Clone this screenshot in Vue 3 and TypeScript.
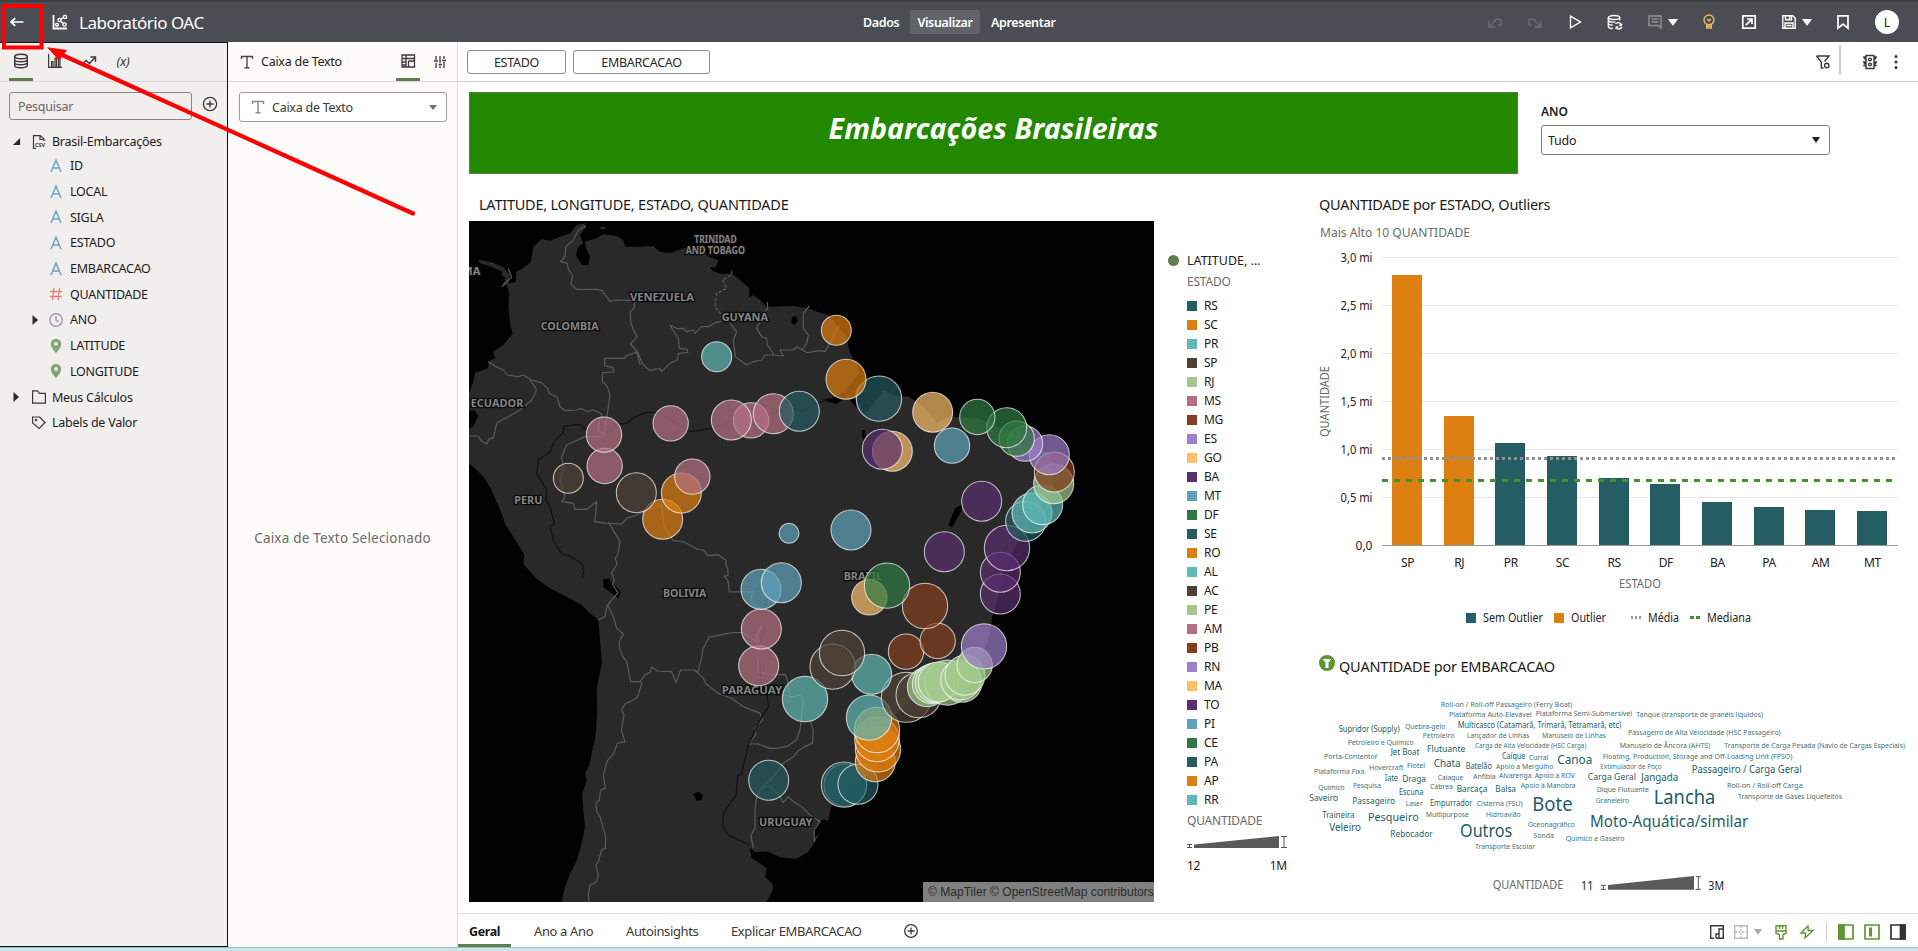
<script setup lang="ts">
interface Field { label: string; kind: 'text' | 'number' | 'time' | 'geo'; expandable?: boolean }
interface Bubble { x: number; y: number; r: number; c: string }

const fields: Field[] = [
  { label: 'ID', kind: 'text' },
  { label: 'LOCAL', kind: 'text' },
  { label: 'SIGLA', kind: 'text' },
  { label: 'ESTADO', kind: 'text' },
  { label: 'EMBARCACAO', kind: 'text' },
  { label: 'QUANTIDADE', kind: 'number' },
  { label: 'ANO', kind: 'time', expandable: true },
  { label: 'LATITUDE', kind: 'geo' },
  { label: 'LONGITUDE', kind: 'geo' },
]

const teal = '#245d63', orange = '#de7f11', aqua = '#5fb9b5', brown = '#4f4138', lime = '#a2c98b', rose = '#b67083'
const rust = '#843e1e', lilac = '#9f7fcc', sand = '#fdc16b', plum = '#5a2f6f', sky = '#60a2bb', green = '#2f7a43'
const palette = [teal, orange, aqua, brown, lime, rose, rust, lilac, sand, plum, sky, green]
const states = 'RS SC PR SP RJ MS MG ES GO BA MT DF SE RO AL AC PE AM PB RN MA TO PI CE PA AP RR'
  .split(' ').map((name, i) => ({ name, color: palette[i % palette.length] }))

const raw: [string, number[][]][] = [
  [orange, [[1129, 451, 45], [1158, 598, 60], [608, 1018, 60], [664, 939, 60], [1251, 1650, 68], [1251, 1678, 67], [1254, 1708, 68], [1246, 1745, 60]]],
  [aqua, [[770, 530, 45], [1748, 974, 60], [1716, 999, 60], [1035, 1557, 68], [1235, 1483, 60], [1227, 1613, 68]]],
  [rose, [[432, 764, 53], [434, 858, 53], [632, 730, 53], [814, 720, 60], [873, 721, 53], [940, 701, 60], [697, 890, 53], [904, 1347, 60], [896, 1457, 60]]],
  [teal, [[1018, 694, 60], [1257, 656, 68], [1697, 1024, 60], [926, 1801, 60], [1152, 1814, 68], [1156, 1815, 64], [1194, 1813, 60]]],
  [brown, [[325, 895, 45], [529, 938, 60], [1146, 1419, 68], [1118, 1460, 68], [1339, 1552, 75], [1376, 1545, 68]]],
  [sky, [[987, 1060, 30], [1173, 1050, 60], [1476, 797, 53], [903, 1228, 60], [964, 1208, 60]]],
  [sand, [[1418, 697, 60], [1297, 814, 60], [1228, 1252, 53]]],
  [green, [[1552, 711, 53], [1640, 743, 60], [1670, 776, 53], [1281, 1217, 68]]],
  [lilac, [[1695, 791, 53], [1768, 824, 60], [1572, 1399, 68]]],
  [rust, [[1783, 876, 60], [1395, 1278, 68], [1433, 1383, 53], [1338, 1415, 53]]],
  [lime, [[1781, 911, 60], [1401, 1521, 59], [1416, 1512, 59], [1426, 1508, 60], [1435, 1506, 60], [1462, 1508, 68], [1506, 1507, 60], [1502, 1500, 60], [1515, 1486, 60], [1544, 1455, 53]]],
  [plum, [[1267, 808, 60], [1565, 964, 60], [1453, 1115, 60], [1641, 1104, 68], [1621, 1177, 60], [1621, 1242, 60]]],
]
// Southern bubbles are painted first so northern ones overlap them.
const bubbles: Bubble[] = raw
  .flatMap(([c, list]) => list.map(([x, y, r]) => ({ x, y, r, c })))
  .sort((a, b) => b.y - a.y)

const countries: [string, number, number, number][] = [
  ['VENEZUELA', 510, 702, 362], ['COLOMBIA', 242, 416, 451], ['GUYANA', 785, 924, 423], ['ECUADOR', 32, 190, 680],
  ['PERU', 163, 247, 971], ['BOLIVIA', 609, 739, 1252], ['PARAGUAY', 785, 966, 1543], ['URUGUAY', 897, 1057, 1939], ['BRAZIL', 1151, 1266, 1201],
]
const islandLabels: [string, number, number, number][] = [['TRINIDAD', 703, 830, 188], ['AND TOBAGO', 677, 855, 221]]

const ticks = ['3,0 mi', '2,5 mi', '2,0 mi', '1,5 mi', '1,0 mi', '0,5 mi', '0,0']
const bars = [
  { s: 'SP', top: 275, out: true }, { s: 'RJ', top: 416, out: true }, { s: 'PR', top: 443, out: false },
  { s: 'SC', top: 456, out: false }, { s: 'RS', top: 478, out: false }, { s: 'DF', top: 484, out: false },
  { s: 'BA', top: 502, out: false }, { s: 'PA', top: 507, out: false }, { s: 'AM', top: 510, out: false }, { s: 'MT', top: 511, out: false },
]

// text, left, right, vertical middle, font size
const words: [string, number, number, number, number][] = [
  ['Roll-on / Roll-off Passageiro (Ferry Boat)', 422, 817, 194, 21],
  ['Plataforma Auto-Elevável', 447, 695, 224, 21],
  ['Plataforma Semi-Submersível', 707, 996, 221, 21],
  ['Tanque (transporte de granéis líquidos)', 1009, 1389, 224, 21],
  ['Multicasco (Catamarã, Trimarã, Tetramarã, etc)', 473, 964, 255, 25],
  ['Supridor (Supply)', 116, 299, 268, 25],
  ['Quebra-gelo', 315, 436, 260, 21],
  ['Petroleiro', 368, 463, 287, 21],
  ['Lançador de Linhas', 500, 688, 287, 21],
  ['Manuseio de Linhas', 726, 918, 287, 21],
  ['Passageiro de Alta Velocidade (HSC Passageiro)', 984, 1442, 278, 21],
  ['Petroleiro e Químico', 143, 341, 308, 21],
  ['Flutuante', 381, 496, 327, 28],
  ['Carga de Alta Velocidade (HSC Carga)', 525, 859, 318, 19],
  ['Manuseio de Âncora (AHTS)', 959, 1231, 317, 21],
  ['Transporte de Carga Pesada (Navio de Cargas Especiais)', 1273, 1815, 317, 21],
  ['Jet Boat', 272, 358, 337, 26],
  ['Porta-Contentor', 72, 233, 350, 21],
  ['Caíque', 606, 676, 349, 25],
  ['Curral', 687, 745, 353, 21],
  ['Canoa', 772, 877, 360, 38],
  ['Floating, Production, Storage and Off-Loading Unit (FPSO)', 908, 1477, 350, 21],
  ['Plataforma Fixa', 42, 194, 395, 21],
  ['Hovercraft', 207, 311, 383, 21],
  ['Flotel', 321, 375, 377, 21],
  ['Chata', 401, 482, 371, 33],
  ['Batelão', 497, 576, 378, 25],
  ['Apoio a Mergulho', 588, 760, 380, 21],
  ['Extimulador de Poço', 901, 1085, 381, 19],
  ['Passageiro / Carga Geral', 1175, 1505, 388, 32],
  ['Iate', 254, 294, 414, 26],
  ['Draga', 307, 378, 417, 28],
  ['Caiaque', 413, 490, 413, 21],
  ['Anfíbia', 519, 587, 410, 21],
  ['Alvarenga', 597, 695, 407, 21],
  ['Apoio a ROV', 704, 825, 407, 21],
  ['Carga Geral', 863, 1008, 411, 29],
  ['Jangada', 1023, 1135, 412, 30],
  ['Químico', 55, 134, 443, 21],
  ['Pesquisa', 159, 243, 437, 21],
  ['Escuna', 297, 370, 456, 25],
  ['Cábrea', 390, 459, 440, 21],
  ['Barcaça', 470, 562, 447, 27],
  ['Balsa', 586, 648, 447, 27],
  ['Apoio à Manobra', 662, 827, 437, 21],
  ['Dique Flutuante', 890, 1047, 449, 21],
  ['Roll-on / Roll-off Carga', 1281, 1508, 437, 21],
  ['Saveiro', 28, 114, 473, 26],
  ['Passageiro', 157, 285, 483, 27],
  ['Laser', 317, 368, 491, 21],
  ['Empurrador', 390, 517, 489, 25],
  ['Cisterna (FSU)', 530, 668, 491, 21],
  ['Bote', 697, 818, 493, 58],
  ['Graneleiro', 887, 987, 482, 21],
  ['Lancha', 1061, 1246, 473, 59],
  ['Transporte de Gases Liquefeitos', 1314, 1626, 470, 21],
  ['Traineira', 67, 163, 526, 25],
  ['Pesqueiro', 204, 356, 532, 34],
  ['Multipurpose', 377, 507, 524, 21],
  ['Hidroavião', 558, 662, 524, 21],
  ['Veleiro', 88, 183, 562, 30],
  ['Rebocador', 271, 398, 582, 27],
  ['Outros', 480, 637, 574, 52],
  ['Oceonagráfico', 683, 825, 554, 21],
  ['Moto-Aquática/similar', 870, 1345, 546, 48],
  ['Sonda', 700, 762, 587, 21],
  ['Químico e Gaseiro', 797, 973, 596, 21],
  ['Transporte Escolar', 525, 705, 620, 21],
]
</script>

<template>
  <div class="app">
    <header class="topbar">
      <div class="brand">
        <svg class="ic back" viewBox="0 0 16 16"><path d="M14.500 8H2M6.200 4.200 2 8l4.200 3.800" stroke="#fff" stroke-width="1.700" fill="none" /></svg>
        <svg class="ic scatter" viewBox="0 0 16 16" fill="none" stroke="#fff" stroke-width="1.300"><path d="M1.500 1v13.500H15" stroke-width="1.800" /><circle cx="5" cy="10.800" r="1.400" /><circle cx="7.500" cy="6" r="1.600" /><circle cx="13" cy="3" r="1.600" /><circle cx="12.500" cy="10.500" r="1.600" /><path d="M8.800 5 11.700 3.500M8.600 7.200l2.800 2.400" /></svg>
        <h1>Laboratório OAC</h1>
      </div>
      <nav class="modes"><span>Dados</span><span class="on">Visualizar</span><span class="pres">Apresentar</span></nav>
      <div class="actions">
        <span class="cell"><svg class="ic dim" viewBox="0 0 16 16"><path d="M2 6.500V13h6.500M2.500 12.500 7 8c1.200-4 7.500-4 7.300.3 0 2-1.300 3.200-3 3.200" /></svg></span>
        <span class="cell"><svg class="ic dim" viewBox="0 0 16 16"><path d="M14 6.500V13H7.500M13.500 12.500 9 8c-1.200-4-7.500-4-7.300.3 0 2 1.300 3.200 3 3.200" /></svg></span>
        <span class="cell"><svg class="ic" viewBox="0 0 16 16"><path d="M3.500 2.200 13.500 8l-10 5.800z" /></svg></span>
        <span class="cell"><svg class="ic" viewBox="0 0 16 16"><ellipse cx="7" cy="3.500" rx="5.700" ry="2" /><path d="M1.300 3.500v9c0 1.200 2 1.900 4.500 2M12.700 3.500v2.700M1.300 6.500c1 1.500 4 1.900 7 1.400M1.300 9.700c1 1 2.500 1.400 4.500 1.400M8.500 10a3 3 0 0 1 5.400.7M12 11.400l2 .4.900-2M14.800 13a3 3 0 0 1-5.500.5M9 15l.3-2 2 .2" /></svg></span>
        <span class="cell wide"><svg class="ic gray" viewBox="0 0 16 16"><path d="M2 2h12v12l-2.800-2.500H2zM4.500 5h7M4.500 8h7" /></svg><i class="caret white" /></span>
        <span class="cell"><svg class="ic bulb" viewBox="0 0 16 16"><path d="M5.700 10.500C4.300 9.300 3 8 3 6a5 5 0 0 1 10 0c0 2-1.300 3.300-2.700 4.500zM5.700 10.500h4.600V14H5.700zM5.700 12.300h4.600M6.200 5l1.800 2 1.800-2" /></svg></span>
        <span class="cell"><svg class="ic" viewBox="0 0 16 16"><path d="M1.800 1.800h12.400v12.400H1.800zM4.800 11.200l5.500-5.500M6 5h5v5" stroke-width="1.700" /></svg></span>
        <span class="cell wide"><svg class="ic" viewBox="0 0 16 16"><path d="M1.800 1.800h10l2.400 2.400v10H1.800zM4.500 1.800v4h6v-4M8.500 2v3M4 14V9h8v5M5.500 11.500h5" /></svg><i class="caret white" /></span>
        <span class="cell"><svg class="ic" viewBox="0 0 16 16"><path d="M3 1.800h10v12.400l-5-4-5 4z" stroke-width="1.700" /></svg></span>
        <span class="avatar">L</span>
      </div>
    </header>

    <div class="body">
      <aside class="data-panel">
        <div class="tabs">
          <span class="tab on"><svg class="ic dark" viewBox="0 0 16 16"><ellipse cx="8" cy="3.500" rx="6.300" ry="2.300" /><path d="M1.700 3.500v9c0 3 12.600 3 12.600 0v-9M1.700 6.500c0 3 12.600 3 12.600 0M1.700 9.500c0 3 12.600 3 12.600 0" /></svg></span>
          <span class="tab"><svg class="ic dark" viewBox="0 0 16 16"><path d="M1.600 1v13.400H15M4.500 14V8.500h1.500V14M8 14V5h1.500v9M11.500 14V3H13v11" stroke-width="1.200" /></svg></span>
          <span class="tab"><svg class="ic dark" viewBox="0 0 16 16"><path d="M1 12l4-4.500 3.500 3L14 4.500M9.500 4h5v5" /></svg></span>
          <span class="tab fx">(x)</span>
        </div>
        <div class="search"><div class="input">Pesquisar</div><svg class="plus" viewBox="0 0 16 16"><circle cx="8" cy="8" r="6.600" /><path d="M8 4.500v7M4.500 8h7" /></svg></div>
        <ul class="tree">
          <li class="root">
            <svg class="tw" viewBox="0 0 10 10"><path d="M9 1v8H1z" /></svg>
            <svg class="ic csv" viewBox="0 0 16 16"><path d="M5 14.300H2.500V1.600h6.800L13 5v2M9 1.800V5.500h4" /><text x="4" y="12.500">CSV</text></svg>
            <span>Brasil-Embarcações</span>
          </li>
          <li v-for="f in fields" :key="f.label" class="leaf">
            <svg class="tw" viewBox="0 0 10 10"><path v-if="f.expandable" d="M2.500 0 8 5l-5.500 5z" /></svg>
            <svg class="ic" viewBox="0 0 16 16" fill="none">
              <path v-if="f.kind === 'text'" d="M3 14 8 2.200 13 14M4.700 10h6.600" stroke="#6fa5bf" stroke-width="1.500" />
              <path v-else-if="f.kind === 'number'" d="M5.800 2 4.500 14M11.500 2l-1.300 12M2 5.500h12M1.800 10.500h12" stroke="#e5806f" stroke-width="1.300" />
              <template v-else-if="f.kind === 'time'"><circle cx="8" cy="8" r="6.200" stroke="#a990bd" stroke-width="1.400" /><path d="M8 4v4.300l2.500 1.200" stroke="#a990bd" stroke-width="1.400" /></template>
              <path v-else fill-rule="evenodd" d="M8 .8a5.200 5.200 0 0 0-5.200 5.200c0 4 5.200 9.200 5.200 9.200s5.200-5.200 5.200-9.200A5.200 5.200 0 0 0 8 .8zm0 3.200a1.900 1.900 0 1 1 0 3.800A1.900 1.900 0 0 1 8 4z" fill="#83a678" stroke="none" />
            </svg>
            <span>{{ f.label }}</span>
          </li>
          <li class="folder">
            <svg class="tw" viewBox="0 0 10 10"><path d="M2.500 0 8 5l-5.500 5z" /></svg>
            <svg class="ic dark thin" viewBox="0 0 16 16"><path d="M1.600 1.800h4.800l2 2.500h6v9.900H1.600z" /></svg>
            <span>Meus Cálculos</span>
          </li>
          <li class="folder">
            <svg class="tw" viewBox="0 0 10 10" />
            <svg class="ic dark thin" viewBox="0 0 16 16"><path d="M1.600 2h7L14 7.500 8.200 13.500 1.600 8z" /><circle cx="5" cy="5" r=".6" /></svg>
            <span>Labels de Valor</span>
          </li>
        </ul>
      </aside>

      <aside class="props-panel">
        <div class="props-head">
          <svg class="tt" viewBox="0 0 14 14"><path d="M1.500 4V1.500h11V4M7 1.500v11M4.500 12.800h5" /></svg>
          <span class="name">Caixa de Texto</span>
          <span class="tab on"><svg class="ic dark" viewBox="0 0 16 16"><path d="M2 2h12.500v12H2zM2 5.500h12.500M6 2v12M2 9h4M2 12h4M8.500 8v6M8.500 8h6" stroke-width="1.300" /></svg></span>
          <svg class="ic dark sl" viewBox="0 0 16 16"><path d="M4 2v4M4 9v5M8 2v7M8 12v2M12 2v3M12 8v6M2 7h4M6.500 10.500h3.500M10 6.500h4" stroke-width="1.300" /></svg>
        </div>
        <div class="picker">
          <svg class="tt lite" viewBox="0 0 14 14"><path d="M1.500 4V1.500h11V4M7 1.500v11M4.500 12.800h5" /></svg>
          <span>Caixa de Texto</span><i class="caret soft" />
        </div>
        <p class="hint">Caixa de Texto Selecionado</p>
      </aside>

      <main class="main">
        <div class="filters">
          <span class="chip a">ESTADO</span><span class="chip b">EMBARCACAO</span>
          <div class="filter-icons">
            <svg class="ic dark" viewBox="0 0 16 16"><path d="M1.500 2h12.500L9.500 7.500M1.500 2l4.800 6v6h2.200" /><circle cx="11.800" cy="11.500" r="2.200" /></svg>
            <i class="bar" />
            <svg class="ic dark" viewBox="0 0 16 16"><path d="M4 1.500h8v13H4zM4 3H1.200M4 8H1M4 11.500H1.200M12 3h2.800M12 8h3M12 11.500h2.800M1.500 3 4 6M1.500 8 4 11M14.500 3 12 6M14.500 8 12 11" /><circle cx="8" cy="5.500" r="1.400" /><circle cx="8" cy="10.500" r="1.400" /></svg>
            <svg class="dots" viewBox="0 0 4 14"><circle cx="2" cy="1.600" r="1.500" /><circle cx="2" cy="7" r="1.500" /><circle cx="2" cy="12.400" r="1.500" /></svg>
          </div>
        </div>

        <div class="canvas">
          <div class="row-top">
            <div class="banner">Embarcações Brasileiras</div>
            <div class="year"><label>ANO</label><div class="select">Tudo<i class="caret" /></div></div>
          </div>
          <div class="row-main">
            <section class="map-col">
              <h3>LATITUDE, LONGITUDE, ESTADO, QUANTIDADE</h3>
              <div class="map">
                <svg viewBox="27 123 2055 2043" width="685" height="681">
                  <rect x="27" y="123" width="2055" height="2043" fill="#020202" />
                  <path fill="#292929" d="M27 850 45 865 70 890 92 925 110 965 125 1000 135 1032 160 1070 192 1122 190 1152 230 1197 270 1225 320 1250 365 1275 385 1296 415 1320 420 1380 426 1450 415 1500 410 1530 412 1600 405 1680 395 1720 388 1755 375 1780 380 1802 367 1840 370 1890 375 1940 365 1990 350 2042 330 2082 315 2120 305 2166H920L940 2128 938 2112 915 2090 920 2065 900 2050 875 2035 870 2003 885 2016 925 2015 960 2032 1010 2036 1045 2015 1065 1985 1085 1950 1105 1920 1113 1880 1140 1850 1200 1800 1250 1770 1290 1690 1285 1640 1300 1610 1370 1545 1440 1510 1530 1500 1560 1455 1590 1360 1597 1310 1612 1262 1618 1230 1630 1180 1660 1110 1690 1060 1720 1010 1760 960 1780 920 1780 860 1760 815 1700 800 1660 760 1600 735 1560 716 1490 712 1470 708 1430 728 1408 700 1375 668 1345 650 1300 646 1270 630 1250 660 1225 690 1210 700 1190 650 1200 600 1190 550 1175 530 1165 500 1160 470 1130 435 1105 405 1080 398 1045 385 1000 378 920 380 900 360 880 346 868 352 868 325 840 300 815 280 785 283 757 272 750 262 768 262 775 240 745 230 725 210 675 203 630 220 600 215 580 198 540 200 495 200 490 180 470 168 430 163 410 175 375 185 378 205 390 230 385 255 365 255 348 225 355 200 370 190 360 165 378 142 375 130 350 135 330 160 300 170 270 182 245 178 220 200 213 245 190 265 168 275 168 305 140 312 148 345 145 380 150 430 158 460 130 495 100 515 105 535 85 545 85 565 45 578 40 605 27 640V693L42 690 55 708 40 738 27 745Z" />
                  <path fill="#292929" d="M55 239 95 247 130 262 150 285 146 312 125 322 137 295 122 283 128 275 90 258 60 250ZM420 142l12 -3 6 8 -16 1z" />
                  <g fill="#020202">
                    <path d="M430 1198l15 -3 20 22 18 20 -8 18 -15 -12 -15 -10 -15 -12zM997 410l12 -2 5 15 -12 12 -9 -8zM700 1843l14 -8 15 10 -5 15 -14 2zM1465 1035l20-50 22-12 -3 20 -28 50zM1206 750l8 0 5 20 -5 20 -8-25zM1085 660l40-8 30-20 5 20 -30 20zM1165 655l20 0 5 30zM1070 1935l20-18 12 5 -8 22 -30 30 -2-25z" />
                    <path d="M1150 640l30-40 50-60 10 30 -50 50 -10 35z" />
                  </g>
                  <g fill="none" stroke="#5b5b5b" stroke-width="3.600" stroke-linejoin="round">
                    <path d="M378 138 355 150 340 180 318 200 315 230 302 245 322 250 325 268 338 285 333 312 350 328 410 328 426 332 450 364 470 360 525 362 522 385 511 395 512 425 520 450 532 470 511 492 528 510 541 555M511 492 532 515 548 552 570 572 600 565 604 575 630 550 652 540 655 520 683 518 682 508 658 505 655 475 645 460 630 435 652 446 670 445 680 455 700 450 705 460 725 440 745 440 765 428 785 424" />
                    <path d="M145 265 155 292 125 320M85 545 105 558 130 570 142 585 175 590 190 585 215 600 245 608 262 625 268 640 292 652 300 680 315 692 350 690 362 685 382 695 400 690 425 702 425 712M210 600 228 625 228 635 215 660 180 690 130 718 110 730 100 775 88 775 80 793 62 780 55 768 27 768M528 517 498 528 495 535 434 535 434 558 458 562 462 576 428 578 427 605 442 620 450 645 433 765 415 750 420 712M430 770 375 770 320 795 305 832 310 860 300 900 315 950 305 965 340 970 345 988 380 988 410 965 405 1025 440 1030 485 1032 500 1015 530 1005 605 975 612 1040 640 1082 670 1085 700 1100 712 1108 730 1110 744 1127 775 1124 797 1140 798 1155 804 1168 804 1187 792 1188 804 1202 808 1236 878 1235 872 1258 885 1278 910 1290" />
                    <path d="M445 1025 480 1085 473 1125 465 1135 472 1152 455 1178 463 1200 457 1212 474 1238 443 1275 438 1290 435 1310 415 1320M443 1275 455 1300 460 1310 470 1345 490 1362 478 1385 478 1400 488 1430 500 1445 512 1505 540 1505 545 1510 532 1553 495 1572 485 1590 492 1605 484 1650 495 1685 472 1690 462 1720 442 1742 430 1785 436 1825 422 1830 418 1860 408 1870 410 1895 420 1910 430 1945 437 1970 436 2005 425 2010 415 2045 407 2055 415 2085 410 2105 390 2115 385 2145 388 2166" />
                    <path d="M540 1505 555 1485 572 1475 574 1461 592 1473 635 1475 648 1508 662 1470 705 1470 712 1478 725 1435 728 1410 747 1372 815 1358 850 1358 890 1385M712 1478 730 1495 738 1512 775 1540 815 1555 850 1580 900 1600 907 1620 885 1645 887 1665 866 1692 895 1692 930 1705 950 1705 980 1700 1010 1680 1020 1650 1030 1560 1020 1545 990 1552 982 1500 975 1483 940 1485 893 1475 900 1400 890 1365 910 1330 905 1290" />
                    <path d="M1050 1620 1060 1650 1057 1690 1035 1700 1015 1712 1000 1730 970 1750 945 1785 905 1822 930 1818 960 1850 970 1868 985 1850 1000 1865 1025 1880 1050 1905 1080 1925 1062 1950 1064 1985M905 1822 890 1850 885 1890 885 1945 873 1965 880 2005M922 365 923 385 912 400 915 415 900 425 890 445 905 470 920 475 922 495 942 525 970 528 960 510 1000 510 1010 500 1042 518 1080 512 1095 515 1115 480 1138 435M1048 378 1030 400 1030 445 1045 465 1040 490 1025 510M942 525 915 525 905 540 880 545 860 555 826 530 820 480 830 455 810 430" />
                    <path stroke-dasharray="10 5" d="M815 272 815 285 787 300 800 325 770 340 765 380 785 405" />
                  </g>
                  <g fill="none" stroke="#111" stroke-width="3.500">
                    <path d="M585 697 560 697 525 710 500 730 470 733 440 762M585 697 620 712 690 755 755 745 830 720 890 722 980 682 1028 692 1060 675 1100 660M385 755 360 733 312 738 308 760 285 782 270 815 235 840 230 880 260 930 258 960 272 985 283 1030 270 1040 280 1080 305 1122 330 1128 365 1152 372 1170 366 1195M920 1545 926 1580 905 1610 865 1695 845 1780 833 1788 828 1845 790 1900 788 1940 805 1965 870 1995M960 1185 940 1210 905 1300 915 1350 895 1400 905 1520" />
                  </g>
                  <g class="geo" font-size="33"><text v-for="[t, a, b, y] in countries" :key="t" :x="a" :y="y" :textLength="b - a" lengthAdjust="spacingAndGlyphs">{{ t }}</text></g>
                  <g class="geo" font-size="29"><text v-for="[t, a, b, y] in islandLabels" :key="t" :x="a" :y="y" :textLength="b - a" lengthAdjust="spacingAndGlyphs">{{ t }}</text><text x="61" y="286" font-size="33" text-anchor="end">MA</text></g>
                  <circle v-for="(b, i) in bubbles" :key="i" :cx="b.x" :cy="b.y" :r="b.r" :fill="b.c" fill-opacity=".7" stroke="#fff" stroke-opacity=".7" stroke-width="3.200" />
                </svg>
                <span class="credit">© MapTiler © OpenStreetMap contributors</span>
              </div>
            </section>

            <section class="legend">
              <div class="lg-title"><i />LATITUDE, ...</div>
              <div class="lg-sub">ESTADO</div>
              <ul><li v-for="s in states" :key="s.name"><i :style="{ background: s.color }" />{{ s.name }}</li></ul>
              <div class="lg-sub qty">QUANTIDADE</div>
              <svg width="102" height="16" viewBox="0 0 102 16"><path d="M7 10.500 92 2v12H7z" fill="#5a5a5a" /><path d="M0 10.500h5M0 13.500h5M2.500 10.500v3M94 2.500h6M94 13.500h6M97 2.500v11" stroke="#555" fill="none" /></svg>
              <div class="lg-range"><span>12</span><span>1M</span></div>
            </section>

            <section class="charts">
              <h3>QUANTIDADE por ESTADO, Outliers</h3>
              <svg viewBox="1300 220 618 420" width="618" height="420" class="bars">
                <text x="1320" y="237" class="mut" textLength="150" lengthAdjust="spacingAndGlyphs">Mais Alto 10 QUANTIDADE</text>
                <g v-for="(t, i) in ticks" :key="t">
                  <path :d="`M1382 ${257.5 + i * 48}H1898`" :stroke="i === 6 ? '#9a9a9a' : '#e6e6e6'" />
                  <text x="1372.500" :y="261.500 + i * 48" text-anchor="end" :textLength="i === 6 ? 17 : 32" lengthAdjust="spacingAndGlyphs" font-size="12">{{ t }}</text>
                </g>
                <g v-for="(b, i) in bars" :key="b.s">
                  <rect :x="Math.round(1392 + i * 51.65)" :y="b.top" width="30" :height="545 - b.top" :fill="b.out ? orange : teal" />
                  <text :x="1407.500 + i * 51.650" y="567" text-anchor="middle" font-size="12" letter-spacing="-.4">{{ b.s }}</text>
                </g>
                <path d="M1382 458.500H1898" stroke="#929292" stroke-width="3" stroke-dasharray="3 3" />
                <path d="M1382 480.500H1898" stroke="#45912a" stroke-width="3" stroke-dasharray="6 6" />
                <text x="1619" y="588" class="mut" font-size="12" textLength="42" lengthAdjust="spacingAndGlyphs">ESTADO</text>
                <text transform="translate(1329 437) rotate(-90)" class="mut" font-size="12" textLength="71" lengthAdjust="spacingAndGlyphs">QUANTIDADE</text>
                <rect x="1466" y="613" width="10" height="10" :fill="teal" /><text x="1483" y="622" textLength="60" lengthAdjust="spacingAndGlyphs" font-size="12">Sem Outlier</text>
                <rect x="1554" y="613" width="10" height="10" :fill="orange" /><text x="1571" y="622" textLength="35" lengthAdjust="spacingAndGlyphs" font-size="12">Outlier</text>
                <path d="M1631 617.500h11" stroke="#929292" stroke-width="3" stroke-dasharray="2 2" /><text x="1648" y="622" textLength="31" lengthAdjust="spacingAndGlyphs" font-size="12">Média</text>
                <path d="M1690 617.500h10" stroke="#45912a" stroke-width="3" stroke-dasharray="4 2" /><text x="1707" y="622" textLength="44" lengthAdjust="spacingAndGlyphs" font-size="12">Mediana</text>
              </svg>
              <h3 class="second"><svg width="16" height="16" viewBox="0 0 16 16"><circle cx="8" cy="8" r="8" fill="#5d9632" /><path d="M3.500 4h9L9.500 7.500V13h-3V7.500z" fill="#fff" /></svg><span>QUANTIDADE por EMBARCACAO</span></h3>
              <svg viewBox="0 150 1854 630" width="618" height="210" class="cloud">
                <text v-for="[t, a, b, y, s] in words" :key="t" :x="a" :y="y + s * 0.340" :font-size="s" :textLength="b - a" lengthAdjust="spacingAndGlyphs" :class="{ small: s < 22 }">{{ t }}</text>
                <g font-size="36">
                  <text x="578" y="748" fill="#6b6b6b" textLength="212" lengthAdjust="spacingAndGlyphs">QUANTIDADE</text>
                  <text x="843" y="750" fill="#222" textLength="37" lengthAdjust="spacingAndGlyphs">11</text>
                  <text x="1225" y="750" fill="#222" textLength="47" lengthAdjust="spacingAndGlyphs">3M</text>
                </g>
                <path d="M924 735 1182 708v41H924z" fill="#5a5a5a" /><path d="M902 736h16M902 748h16M910 736v12M1187 710h16M1187 748h16M1195 710v38" fill="none" stroke="#555" stroke-width="3" />
              </svg>
            </section>
          </div>
        </div>

        <footer class="sheets">
          <span class="sheet on">Geral</span><span class="sheet s2">Ano a Ano</span><span class="sheet s3">Autoinsights</span><span class="sheet s4">Explicar EMBARCACAO</span>
          <svg class="plus" viewBox="0 0 16 16"><circle cx="8" cy="8" r="6.300" /><path d="M8 4.500v7M4.500 8h7" /></svg>
          <div class="tools">
            <svg class="ic dark" viewBox="0 0 16 16"><path d="M14.300 5V1.700H1.700v12.600H5M7 14.300V10h3M10 14.300h4.300V5H10v9M7 14.300h3" /></svg>
            <svg class="ic" viewBox="0 0 16 16"><path d="M1.700 1.700h12.600v12.600H1.700z" stroke="#bbb" /><path d="M8 2v12M2 8h12" stroke="#bbb" stroke-dasharray="2 1.500" /></svg>
            <i class="caret lite" />
            <svg class="ic grn" viewBox="0 0 16 16"><path d="M3 1.700h10v7.500l-3 1.500V15H6.500v-4.300L3 9.200zM3 7h10M6.500 2v3M9.500 2v3" /></svg>
            <svg class="ic grn" viewBox="0 0 16 16"><path d="M9 2 2 9h4.500L6 14l8-7.500H9.200z" /></svg>
            <i class="sep" />
            <svg class="ic grn lay" viewBox="0 0 16 16"><path d="M1 1h14v14H1z" /><path d="M1 1h5v14H1z" fill="#5d9632" /></svg>
            <svg class="ic grn lay" viewBox="0 0 16 16"><path d="M1 1h14v14H1z" /><path d="M6.500 3.500v9" stroke-width="3" /></svg>
            <svg class="ic lay" viewBox="0 0 16 16"><path d="M1 1h14v14H1z" stroke="#333" /><path d="M10.500 1H15v14h-4.500z" fill="#333" stroke="#333" /></svg>
          </div>
        </footer>
      </main>
    </div>
    <div class="edge" />
    <svg class="pointer" width="430" height="230" viewBox="0 0 430 230">
      <rect x="4" y="6" width="37.500" height="41.500" fill="none" stroke="#f00" stroke-width="4" />
      <path d="M60 54 413 213.500" stroke="#f00" stroke-width="4.200" stroke-linecap="round" /><path d="M47 47.300 67 50 59 60.500z" fill="#f00" />
    </svg>
  </div>
</template>

<style>
html, body { margin: 0; overflow: hidden; }
</style>

<style scoped>
* { box-sizing: border-box; }
ul, h1, h3, p { margin: 0; padding: 0; font-weight: 400; list-style: none; }
.app { position: relative; width: 1918px; height: 951px; display: flex; flex-direction: column; font-family: "Noto Sans", "Open Sans", sans-serif; font-size: 12.500px; letter-spacing: -.26px; color: #1d1b1a; background: #fff; overflow: hidden; }
.ic { width: 16px; height: 16px; fill: none; stroke: #fff; stroke-width: 1.400; flex: none; display: block; }
.ic.dark { stroke: #3c3835; }
.ic.thin { stroke-width: 1.200; }
.ic.dim { stroke: #6b6e73; }
.ic.gray { stroke: #8f9194; }
.ic.bulb { stroke: #e8bb54; }
.ic.grn { stroke: #5d9632; }
.caret { width: 0; height: 0; border: 4.500px solid transparent; border-top: 6px solid #1d1b1a; border-bottom: 0; display: block; flex: none; }
.caret.white { border-top: 7px solid #fff; border-left-width: 5px; border-right-width: 5px; }
.caret.soft { border-top-color: #77736f; border-left-width: 4px; border-right-width: 4px; border-top-width: 5px; }
.caret.lite { border-top-color: #a9a9a9; }

.topbar { height: 42px; flex: none; display: grid; grid-template-columns: 857px 1fr auto; align-items: center; background: #4a4d54; border-top: 2px solid #3f4042; color: #fff; }
.brand { display: flex; align-items: center; padding-left: 9px; height: 40px; }
.back { margin-right: 27px; }
.scatter { margin-right: 11px; }
h1 { font-size: 17px; letter-spacing: -.5px; line-height: 22px; padding-top: 2px; }
.modes { display: flex; align-items: center; font-weight: 600; font-size: 12.500px; letter-spacing: -.35px; }
.modes span { height: 24px; line-height: 25px; width: 53px; padding-left: 6px; }
.modes .on { width: 70px; padding: 0; text-align: center; background: #606368; border-radius: 3px; }
.modes .pres { width: 80px; padding-left: 11px; }
.actions { display: flex; align-items: center; padding-right: 19px; }
.cell { width: 40px; display: flex; justify-content: center; align-items: center; }
.cell.wide { width: 54px; justify-content: flex-start; padding-left: 12px; gap: 5px; }
.avatar { width: 24px; height: 24px; margin-left: 12px; border-radius: 50%; background: #fff; color: #222; text-align: center; line-height: 25px; font-size: 12.500px; }

.body { display: flex; height: 905px; flex: none; }
.data-panel { width: 228px; background: #f0efee; border-top: 1px solid #111; border-right: 1px solid #111; border-bottom: 1px solid #111; }
.tabs { height: 39px; border-bottom: 1px solid #dcdad8; display: flex; padding-left: 9px; gap: 10px; }
.tab { width: 24px; display: flex; align-items: center; justify-content: center; border-bottom: 3px solid transparent; padding-top: 1px; }
.tab.on { border-bottom-color: #5f7d4f; }
.tab.fx { font-style: italic; font-size: 13px; color: #3c3835; }
.search { display: flex; align-items: flex-start; padding: 10px 0 0 9px; gap: 10px; }
.input { width: 183px; height: 28px; border: 1px solid #8b8580; border-radius: 3px; padding-left: 8px; line-height: 27px; color: #6b6662; font-size: 12.500px; }
.plus { width: 16px; height: 16px; fill: none; stroke: #3c3835; stroke-width: 1.300; margin-top: 4px; }
.tree { padding-top: 10px; }
.tree li { height: 25.700px; display: flex; align-items: center; white-space: nowrap; }
.tree li.root { height: 23px; }
.tw { width: 10px; height: 10px; fill: #2d2a28; flex: none; }
.root .tw, .folder .tw { margin: 0 10px 0 11px; }
.root .ic, .folder .ic { margin-right: 5px; }
.leaf .tw { margin: 0 8px 0 30px; }
.leaf .ic { margin-right: 6px; }
.root .tw { width: 9px; height: 9px; margin-left: 12px; }
.csv { stroke: #3c3835; stroke-width: 1.200; }
.csv text { font-size: 5.500px; font-weight: 700; fill: #3c3835; stroke: none; letter-spacing: 0; }

.props-panel { width: 230px; background: #fcfbfa; border-right: 1px solid #dedcda; }
.props-head { height: 40px; display: flex; align-items: center; border-bottom: 1px solid #dcdad8; padding-left: 12px; }
.tt { width: 14px; height: 14px; fill: none; stroke: #4d4946; stroke-width: 1.400; }
.tt.lite { stroke: #8f8b88; }
.name { margin-left: 7px; width: 135px; }
.props-head .tab { height: 39px; align-self: flex-start; }
.sl { margin-left: 12px; }
.picker { margin: 10px 0 0 11px; width: 208px; height: 30px; border: 1px solid #a09c98; border-radius: 3px; background: #fff; display: flex; align-items: center; padding: 0 9px 0 11px; color: #3c3835; }
.picker span { margin-left: 7px; flex: 1; }
.hint { margin-top: 406px; text-align: center; font-size: 13.500px; letter-spacing: .2px; color: #6b6b6b; line-height: 20px; }

.main { flex: 1; display: flex; flex-direction: column; min-width: 0; }
.filters { height: 40px; flex: none; display: flex; align-items: center; border-bottom: 1px solid #d0cecc; padding-left: 9px; }
.chip { height: 24px; line-height: 23px; border: 1px solid #8f8b88; border-radius: 3px; text-align: center; color: #2a2826; font-size: 12.500px; }
.chip.a { width: 99px; margin-right: 7px; }
.chip.b { width: 137px; }
.filter-icons { margin-left: auto; display: flex; align-items: center; height: 40px; padding-right: 20px; }
.bar { width: 2px; height: 30px; background: #d2ccc4; margin: 0 21px 4px 8px; }
.dots { width: 4px; height: 14px; margin-left: 16px; fill: #3c3835; }

.canvas { height: 831px; flex: none; padding-top: 10px; }
.row-top { display: flex; height: 82px; padding-left: 11px; }
.banner { width: 1049px; height: 82px; background: #228800; border: 1px solid #55803f; color: #fff; font-weight: 700; font-style: italic; font-size: 28.500px; letter-spacing: .1px; line-height: 70px; text-align: center; }
.year { margin-left: 23px; padding-top: 11px; }
.year label { display: block; font-weight: 600; font-size: 12px; line-height: 17px; height: 22px; letter-spacing: -.1px; }
.select { width: 289px; height: 30px; border: 1px solid #817c78; border-radius: 3px; display: flex; align-items: center; justify-content: space-between; padding: 0 9px 0 6px; }
.row-main { display: flex; padding-left: 11px; }
h3 { font-size: 14.500px; letter-spacing: -.23px; line-height: 20px; white-space: nowrap; }
.map-col { width: 685px; padding-top: 20px; }
.map-col h3 { padding-left: 10px; height: 27px; }
.map { position: relative; height: 681px; }
.map svg { display: block; }
.geo { font-weight: 700; fill: #858585; stroke: #0b0b0b; stroke-width: 8px; paint-order: stroke; letter-spacing: 0; }
.credit { position: absolute; right: 0; bottom: 0; width: 231px; height: 20px; padding-left: 5px; background: #808080; color: #2b2b2b; font: 12px/20px "Liberation Sans", Arial, sans-serif; letter-spacing: .03px; white-space: nowrap; }
.legend { width: 146px; padding: 77px 0 0 33px; }
.lg-title { display: flex; align-items: center; margin-left: -19px; height: 18px; font-size: 12.500px; letter-spacing: 0; }
.lg-title i { width: 11px; height: 11px; border-radius: 50%; background: #5f7d4f; margin-right: 8px; }
.lg-sub { color: #6b6b6b; font-size: 12px; line-height: 18px; margin-top: 4px; letter-spacing: -.2px; }
.legend ul { padding-top: 5px; }
.legend li { height: 19px; display: flex; align-items: center; font-size: 12px; }
.legend li i { width: 10px; height: 10px; margin-right: 7px; }
.lg-sub.qty { margin-top: 3px; }
.legend svg { display: block; margin-top: 4px; }
.lg-range { width: 100px; display: flex; justify-content: space-between; font-size: 12px; line-height: 18px; margin-top: 7px; }
.charts { width: 618px; padding-top: 20px; }
.charts h3 { padding-left: 19px; height: 26px; letter-spacing: -.28px; }
.charts h3.second { height: 29px; padding-top: 22px; display: flex; align-items: center; gap: 4px; letter-spacing: -.2px; }
.second svg { margin-top: -3px; }
.second span { padding-top: 2px; }
.charts svg { display: block; flex: none; }
.bars { font-size: 13px; fill: #222; letter-spacing: 0; margin-bottom: -1px; }
.bars path { fill: none; }
.mut { fill: #6b6b6b; }
.cloud { fill: #245d63; letter-spacing: 0; margin-top: 22px; overflow: visible; }
.cloud .small { fill: #3f7277; }

.sheets { height: 34px; flex: none; border-top: 1px solid #dedcda; display: flex; color: #3c3835; }
.sheet { line-height: 35px; white-space: nowrap; font-size: 13px; letter-spacing: -.37px; }
.sheet.on { width: 53px; padding-left: 11px; font-weight: 700; color: #161513; border-bottom: 3px solid #5f7d4f; font-size: 12.500px; }
.s2 { margin-left: 23px; width: 92px; }
.s3 { width: 105px; }
.s4 { width: 172px; }
.sheets .plus { margin-top: 9px; }
.tools { margin-left: auto; display: flex; align-items: center; padding: 3px 12px 0 0; }
.tools .ic { margin-left: 8px; }
.tools .caret { margin-left: 5px; }
.tools .caret + .ic { margin-left: 11px; }
.tools .ic.grn + .ic.grn { margin-left: 10px; }
.sep { width: 1px; height: 18px; background: #ccc; margin: 0 2px 0 11px; }
.tools .lay, .tools .ic.lay + .ic.lay { margin-left: 10px; stroke-width: 1.700; }
.tools .lay { margin-left: 9px; }
.edge { height: 4px; background: #cbe4ea; border-top: 1px solid #9fbcbf; }
.pointer { position: absolute; left: 0; top: 0; }
</style>
